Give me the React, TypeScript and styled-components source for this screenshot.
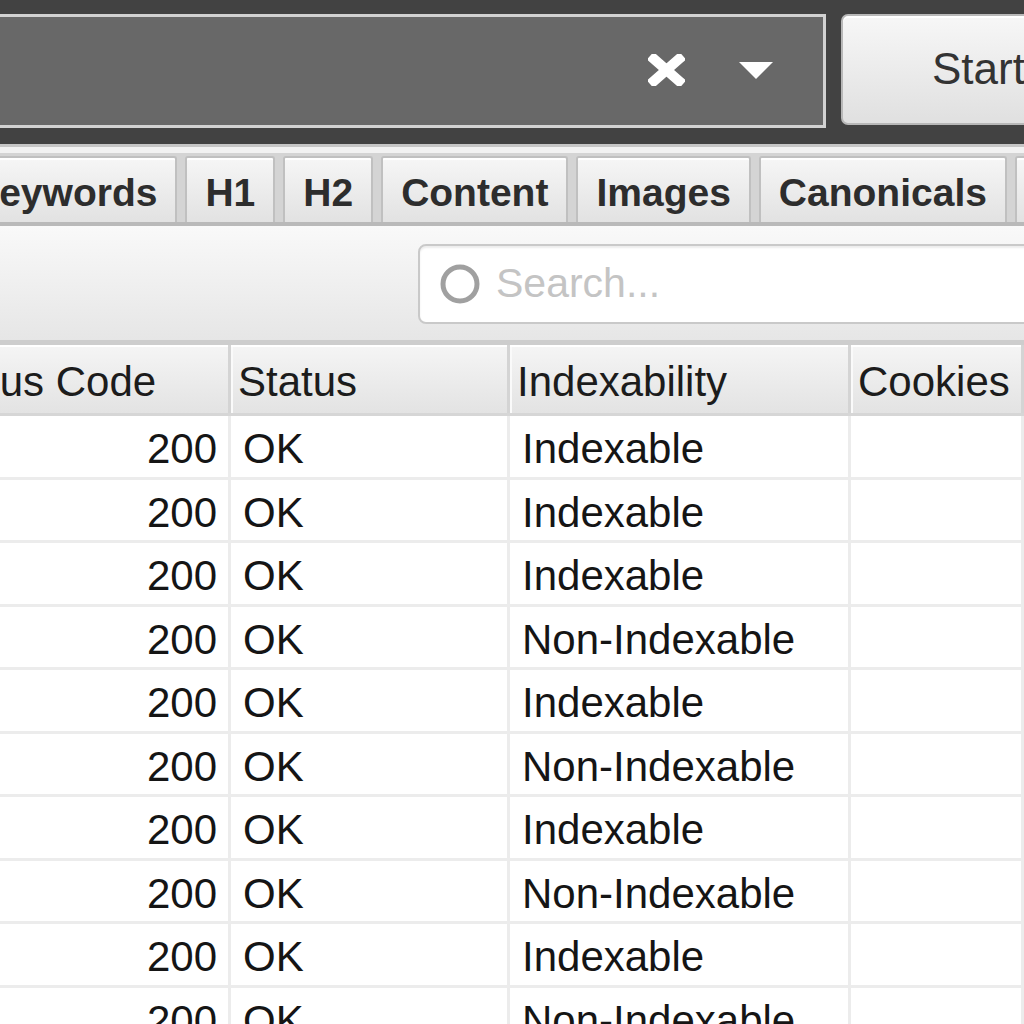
import React from 'react';
import styled, { createGlobalStyle } from 'styled-components';

const GlobalStyle = createGlobalStyle`
    html, body {
        margin: 0;
        padding: 0;
        background: #ffffff;
        overflow: hidden;
    }
    body {
        font-family: "Liberation Sans", Arial, sans-serif;
    }
`;

const Screen = styled.div`
    width: 1024px;
    height: 1024px;
    overflow: hidden;
    display: flex;
    flex-direction: column;
    background: #ffffff;
`;

const TopBar = styled.div`
    height: 144px;
    flex-shrink: 0;
    background: #424242;
    display: flex;
    align-items: flex-start;
    gap: 15px;
    padding-top: 14px;
    box-sizing: border-box;
`;

const UrlField = styled.div`
    margin-left: -10px;
    width: 836px;
    height: 114px;
    box-sizing: border-box;
    background: #686868;
    border: 3px solid #d2d2d2;
    display: flex;
    align-items: center;
    justify-content: flex-end;
    gap: 54px;
    padding-right: 50px;
    padding-bottom: 2px;
`;

const IconSlot = styled.div`
    display: flex;
    align-items: center;
    justify-content: center;
`;

const StartButton = styled.div`
    flex: 1;
    margin-right: -60px;
    height: 111px;
    box-sizing: border-box;
    border: 2px solid #b8b8b8;
    border-radius: 7px;
    background: linear-gradient(#f7f7f7, #e0e0e0);
    box-shadow: inset 0 2px 0 #ffffff;
    font-size: 44px;
    color: #333333;
    display: flex;
    align-items: center;
    padding-left: 89px;
    padding-bottom: 2px;
    white-space: nowrap;
`;

const TabStrip = styled.div`
    flex-shrink: 0;
    height: 82px;
    box-sizing: border-box;
    border-top: 3px solid #c6c6c6;
    border-bottom: 4px solid #b9b9b9;
    background: linear-gradient(#f2f2f2 0, #f2f2f2 6px, #d4d4d4 6px);
    padding-top: 9px;
    display: flex;
    align-items: stretch;
    gap: 8px;
    margin-left: -49px;
`;

const Tab = styled.div`
    box-sizing: border-box;
    padding: 6px 18px 0;
    border: 2px solid #c0c0c0;
    border-bottom: none;
    border-radius: 3px 3px 0 0;
    background: linear-gradient(#f6f6f6, #e2e2e2);
    box-shadow: inset 0 2px 0 #ffffff;
    font-size: 39px;
    font-weight: bold;
    color: #2d2d2d;
    display: flex;
    align-items: center;
    white-space: nowrap;
`;

const SearchPanel = styled.div`
    flex-shrink: 0;
    height: 119px;
    box-sizing: border-box;
    background: linear-gradient(#f9f9f9, #e6e6e6);
    border-bottom: 5px solid #cdcdcd;
    padding: 18px 0 0 418px;
`;

const SearchBox = styled.div`
    width: 640px;
    height: 80px;
    box-sizing: border-box;
    background: #ffffff;
    border: 2px solid #c9c9c9;
    border-radius: 8px;
    box-shadow: inset 0 2px 2px rgba(0, 0, 0, 0.08);
    display: flex;
    align-items: center;
    gap: 14px;
    padding-left: 18px;
`;

const Placeholder = styled.span`
    font-size: 41px;
    color: #c4c4c4;
    padding-bottom: 2px;
`;

const COLUMNS = '313px 279px 341px 1fr';

const Table = styled.div`
    margin-left: -82px;
    display: flex;
    flex-direction: column;
`;

const HeaderRow = styled.div`
    display: grid;
    grid-template-columns: ${COLUMNS};
    height: 68px;
    border-bottom: 3px solid #d6d6d6;
`;

const HeaderCell = styled.div`
    box-sizing: border-box;
    border-right: 3px solid #d4d4d4;
    background: linear-gradient(#f5f5f5, #e3e3e3);
    box-shadow: inset 0 2px 0 #ffffff, inset 2px 0 0 #fafafa;
    font-size: 42px;
    color: #1c1c1c;
    display: flex;
    align-items: center;
    padding: 6px 0 0 7px;
    white-space: nowrap;
`;

const Row = styled.div`
    display: grid;
    grid-template-columns: ${COLUMNS};
    height: 63.5px;
    box-sizing: border-box;
    border-bottom: 3px solid #ececec;
`;

const Cell = styled.div<{ $align?: 'left' | 'right' }>`
    box-sizing: border-box;
    border-right: 3px solid #ececec;
    font-size: 42px;
    color: #151515;
    display: flex;
    align-items: center;
    justify-content: ${(p) => (p.$align === 'right' ? 'flex-end' : 'flex-start')};
    padding: 6px ${(p) => (p.$align === 'right' ? '11px' : '0')} 0 12px;
    white-space: nowrap;
`;

const rows = [
    'Indexable',
    'Indexable',
    'Indexable',
    'Non-Indexable',
    'Indexable',
    'Non-Indexable',
    'Indexable',
    'Non-Indexable',
    'Indexable',
    'Non-Indexable',
];

const tabs = ['Keywords', 'H1', 'H2', 'Content', 'Images', 'Canonicals', 'Pagination'];

const App = () => {
    return (
        <Screen>
            <GlobalStyle />
            <TopBar>
                <UrlField>
                    <IconSlot>
                        <svg width="37" height="32" viewBox="0 0 37 32">
                            <path d="M6 5 L31 27 M31 5 L6 27" stroke="#ffffff" strokeWidth="10" strokeLinecap="square" />
                        </svg>
                    </IconSlot>
                    <IconSlot>
                        <svg width="34" height="17" viewBox="0 0 34 17">
                            <polygon points="0,0 34,0 17,17" fill="#ffffff" />
                        </svg>
                    </IconSlot>
                </UrlField>
                <StartButton>Start</StartButton>
            </TopBar>
            <TabStrip>
                {tabs.map((t) => (
                    <Tab key={t}>{t}</Tab>
                ))}
            </TabStrip>
            <SearchPanel>
                <SearchBox>
                    <svg width="44" height="44" viewBox="0 0 44 44">
                        <circle cx="22" cy="22" r="17" fill="none" stroke="#a0a0a0" strokeWidth="5" />
                    </svg>
                    <Placeholder>Search...</Placeholder>
                </SearchBox>
            </SearchPanel>
            <Table>
                <HeaderRow>
                    <HeaderCell>Status Code</HeaderCell>
                    <HeaderCell>Status</HeaderCell>
                    <HeaderCell>Indexability</HeaderCell>
                    <HeaderCell>Cookies</HeaderCell>
                </HeaderRow>
                {rows.map((r, i) => (
                    <Row key={i}>
                        <Cell $align="right">200</Cell>
                        <Cell>OK</Cell>
                        <Cell>{r}</Cell>
                        <Cell />
                    </Row>
                ))}
            </Table>
        </Screen>
    );
};

export default App;
